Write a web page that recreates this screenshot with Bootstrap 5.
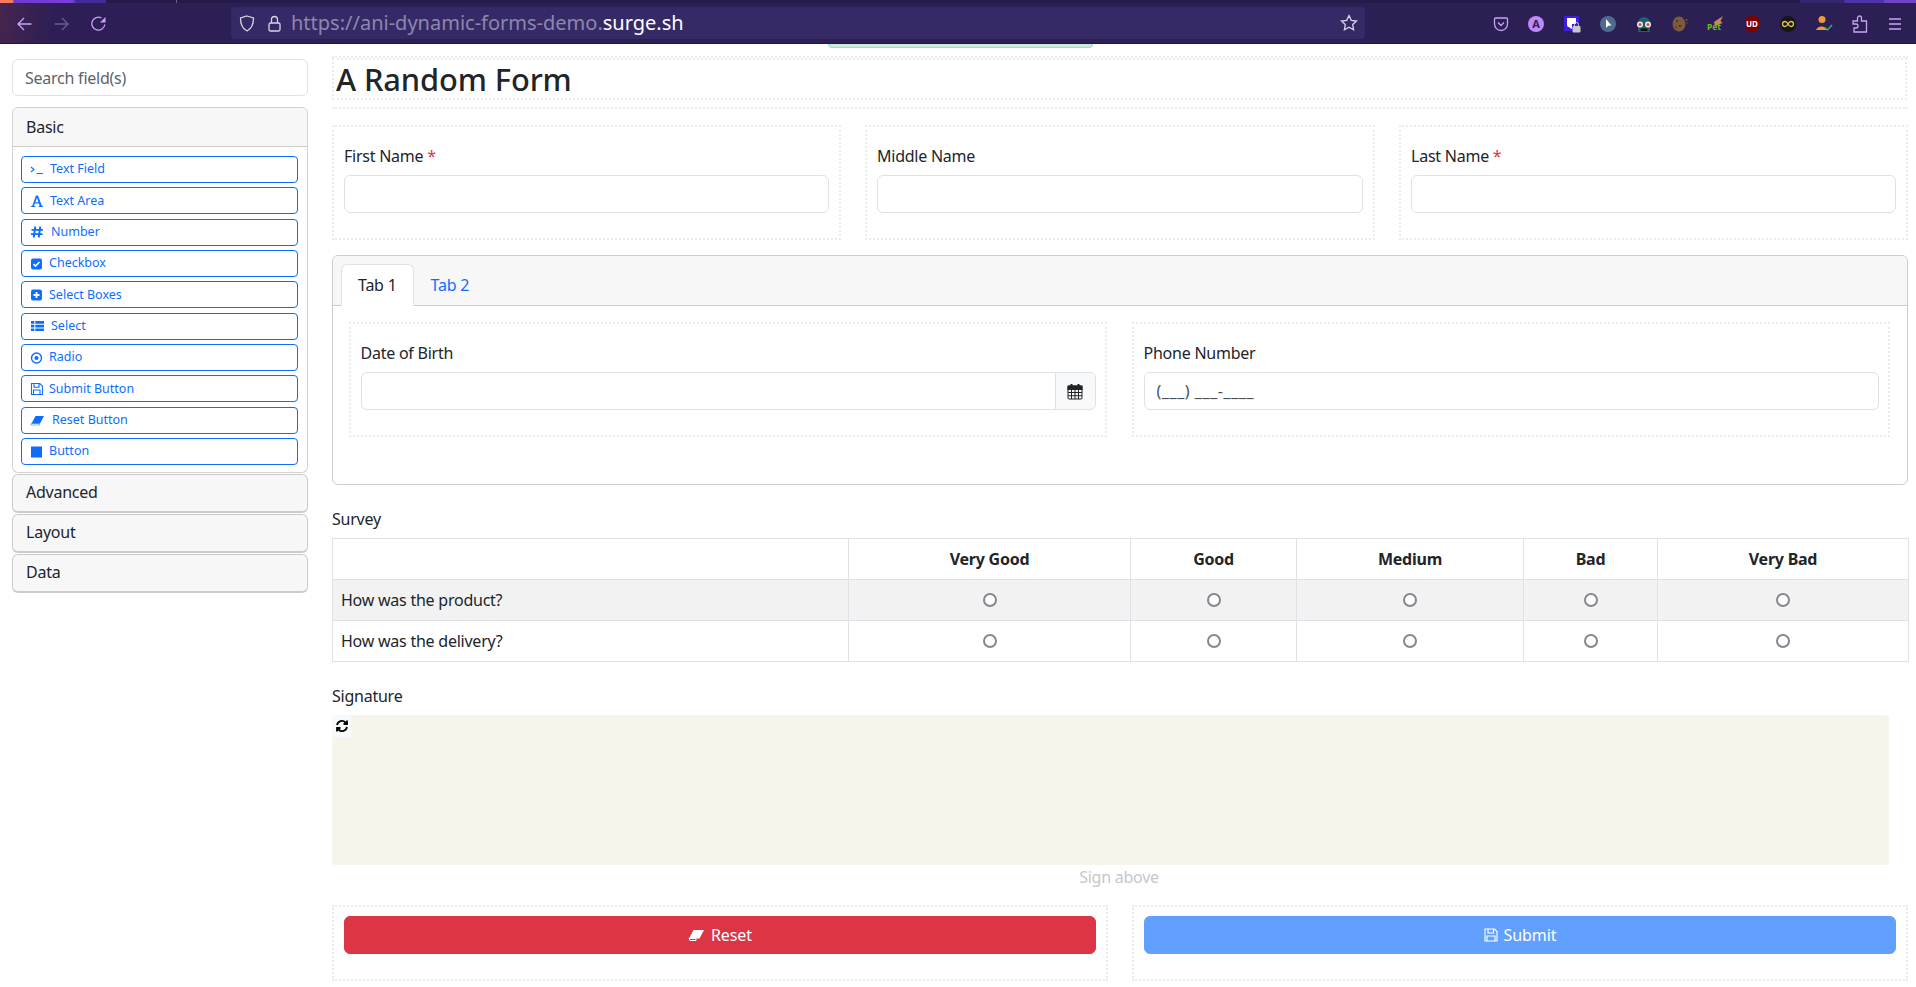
<!DOCTYPE html>
<html lang="en">
<head>
<meta charset="utf-8">
<title>A Random Form</title>
<link rel="stylesheet" href="https://cdn.jsdelivr.net/npm/bootstrap@5.3.0/dist/css/bootstrap.min.css">
<style>
html,body{height:987px;overflow:hidden}
body{font-family:"Noto Sans","Open Sans",sans-serif;font-size:16px;letter-spacing:-.24px;color:#212529;background:#fff}
.ff-chrome{height:44px;background:linear-gradient(100deg,#47254e 0,#2d1f55 55px,#2b1f54 100%);border-bottom:1px solid #1f1640;position:relative;overflow:hidden}
.ff-strip{height:3px;background:#251a49}
.ff-glow{position:absolute;top:0;height:3px}
.ff-glow-l{left:0;width:106px;background:linear-gradient(90deg,#f77a5f 0,#f77a5f 12%,#6c3ad0 13%,#7a3fd8 68%,#45289a 72%,#45289a 100%)}
.ff-glow-r{left:1800px;width:116px;background:linear-gradient(90deg,#35246f 0,#35246f 38%,#4f33a8 39%,#4f33a8 72%,#7042c8 73%,#7042c8 100%)}
.ff-sep{position:absolute;left:176px;top:0;width:1px;height:3px;background:#6d6390}
.ff-bar{height:41px;padding-left:17px;padding-right:13px}
.ff-nav{gap:22px;width:214px}
.ff-url{width:1134px;height:32px;margin-top:-1px;background:#352a66;border-radius:4px;padding:0 7px 0 8px;font-size:20px;letter-spacing:0;color:#8f86ad;white-space:nowrap}
.ff-url b{font-weight:400;color:#fff}
.ff-url svg{flex:none}
.u-lock{margin-left:13px}
.u-text{margin-left:10px}
.ff-ext{margin-left:auto;gap:18px}
.ff-ext svg{display:block}
.peek-tab{position:absolute;left:828px;top:44px;width:265px;height:4px;background:#c9ebdc;border-radius:0 0 4px 4px;border:1px solid #a8d8c4;border-top:0}
.side-col{width:296px;margin-left:12px;margin-top:15px;flex:none}
.main-col{width:1576px;margin-left:24px;margin-top:12px;flex:none}
.search-in{height:37px;font-size:16px;letter-spacing:-.24px;padding:0 12px;border-color:#dee2e6;border-radius:6px}
.search-in::placeholder{color:#5c636a}
.grp{margin-top:11px;border-radius:6px}
.grp .card-header{height:39px;padding:0 13px;font-size:16px;line-height:38px;background:#f7f7f7;border-color:#ccc}
.grp .card-body{padding:9px 9px 7px 8px;height:325px}
.mini{height:39px;border-bottom:2px solid #ccc;border-radius:6px;margin-top:1px;background:#f7f7f7}
.mini .card-header{border:0;background:transparent;padding:0 13px;line-height:35px;height:37px;font-size:16px}
.tool{height:27px;margin-bottom:4.35px;font-size:12.5px;letter-spacing:0;padding:0 8px;border:1.5px solid #0d6efd;border-radius:4px;color:#0d6efd;line-height:1;gap:5px;background:#fff;text-align:left;flex:none}
.tool:last-child{margin-bottom:0}
.tool svg{flex:none;width:14px;height:14px}
.ti1{margin-left:1px}
.ti2{margin-left:2px}
.ti3{margin-left:3px}
.dz{border:2px dotted #ebebeb}
.dz-outer{height:53px;border-bottom:2px dotted #ebebeb;border-top:2px dotted #ebebeb;margin-bottom:16px;width:1576px}
.dz-title{height:42px;border:2px dotted #ebebeb;margin:0 1px 0 0;padding-left:2px;font-size:30.8px;letter-spacing:-.1px;font-weight:500;line-height:38px}
.fld-row{gap:24px}
.fld-1{width:509px}
.fld-2{width:510px}
.fld{height:115px;padding:17px 10px 0}
.fld label,.fld-b label{display:block;font-size:16px;line-height:24px;margin-bottom:7px}
.fld .form-control,.fld-b .form-control{height:38px}
.req{color:#dc3545}
.tabs-card{height:230px;margin-top:15px;border-color:#ccc;border-radius:6px}
.tabs-card .card-header{height:50px;padding:8px 8px 0;background:#f7f7f7;border-color:#ccc}
.tabs-card .nav-tabs{margin:0;border:0}
.tabs-card .nav-link{height:42px;padding:0 16px;line-height:41px;font-size:16px;color:#0d6efd;border-radius:6px 6px 0 0}
.tabs-card .nav-link.active{color:#212529;background:#fff;border-color:#dee2e6 #dee2e6 #fff}
.tabs-card .card-body{padding:16px 16px}
.tab-cols{gap:25px}
.fld-w{width:758px}
.fld-b{height:115px;padding:17px 9.5px 0}
.mask-in{color:#495057;letter-spacing:.55px}
.cal{background:#f8f9fa;border-color:#dee2e6;width:41px;padding:0;justify-content:center}
.cap{font-size:16px;line-height:24px}
.cap-a{margin-top:22px;margin-bottom:7px}
.cap-b{margin-top:22px;margin-bottom:7px}
.grid-tb{margin:0;width:1576px;table-layout:fixed;border-color:#dee2e6}
.grid-tb th,.grid-tb td{height:41px;padding:0 8px;vertical-align:middle;font-size:16px}
.grid-tb th{font-weight:700;text-align:center}
.grid-tb tbody tr:nth-child(odd) td{background:#f2f2f2}
.c1{width:516px}.c2{width:282px}.c3{width:166px}.c4{width:227px}.c5{width:134px}.c6{width:251px}
.rd{display:block;margin:0 auto;width:14px;height:14px;border:2px solid #85888f;border-radius:50%;background:#fff}
.sign-pad{width:1557px;height:150px;background:#f5f5eb;border-radius:4px;position:relative}
.sign-re{position:absolute;left:0;top:0;width:19px;height:22px;background:#f8f9fa;display:flex;align-items:center;justify-content:center}
.sign-note{width:1574px;text-align:center;color:#c4c7ca;font-size:16px;line-height:24px}
.act-row{gap:24px;margin-top:16px}
.act{width:776px;height:76px;padding:9px 10px 0}
.act-btn{height:38px;width:100%;display:flex;align-items:center;justify-content:center;gap:6px;padding:0;font-size:16px;letter-spacing:-.1px}
.act-blue{background:#62a0ff;border-color:#62a0ff;color:#fff}
.ico-t{font-family:"Noto Sans",sans-serif;font-weight:700;letter-spacing:0}
</style>
</head>
<body>
<div class="ff-chrome">
  <div class="ff-strip"></div>
  <div class="ff-glow ff-glow-l"></div>
  <div class="ff-sep"></div>
  <div class="ff-glow ff-glow-r"></div>
  <div class="ff-bar d-flex align-items-center">
    <div class="ff-nav d-flex align-items-center">
      <svg width="15" height="14" viewBox="0 0 15 14" fill="none" stroke="#c9a4f5" stroke-width="1.300"><path d="M14.500 7H1M7 1 1 7l6 6"/></svg>
      <svg width="15" height="14" viewBox="0 0 15 14" fill="none" stroke="#6d5a96" stroke-width="1.300"><path d="M.5 7H14M8 1l6 6-6 6"/></svg>
      <svg width="15" height="15" viewBox="0 0 15 15" fill="none" stroke="#c9a4f5" stroke-width="1.300"><path d="M13.800 8.500A6.500 6.500 0 1 1 10.500 2"/><path d="M14.500 1v5.500H9Z" fill="#c9a4f5" stroke="none"/></svg>
    </div>
    <div class="ff-url d-flex align-items-center">
      <svg width="16" height="17" viewBox="0 0 16 17" fill="none" stroke="#d8d4e6" stroke-width="1.300"><path d="M8 1 14.500 3c0 6.500-1.500 10.500-6.500 13C3 13.500 1.500 9.500 1.500 3Z"/></svg>
      <svg class="u-lock" width="13" height="17" viewBox="0 0 13 17" fill="none" stroke="#d8d4e6" stroke-width="1.300"><rect x="1" y="8" width="11" height="8" rx="1.500"/><path d="M3.500 8V4.500a3 3 0 0 1 6 0V8"/></svg>
      <span class="u-text">https://ani-dynamic-forms-demo.<b>surge.sh</b></span>
      <svg class="ms-auto" width="18" height="18" viewBox="0 0 18 18" fill="none" stroke="#d8d4e6" stroke-width="1.300"><path d="M9 1.500 11.300 6.300l5.200.7-3.800 3.600.9 5.200L9 13.300l-4.600 2.500.9-5.200L1.500 7l5.200-.7Z"/></svg>
    </div>
    <div class="ff-ext d-flex align-items-center">
      <svg width="16" height="16" viewBox="0 0 16 16" fill="none" stroke="#c9a4f5" stroke-width="1.300"><path d="M2.500 2h11a1 1 0 0 1 1 1v5a6.500 6.500 0 0 1-13 0V3a1 1 0 0 1 1-1Z"/><path d="m5 6.500 3 3 3-3"/></svg>
      <svg width="18" height="18" viewBox="0 0 18 18"><circle cx="9" cy="9" r="8" fill="#c08af5"/><text class="ico-t" x="9" y="13" font-size="11" text-anchor="middle" fill="#2b1f54">A</text></svg>
      <svg width="18" height="18" viewBox="0 0 18 18"><rect x="1" y="1" width="15" height="15" fill="#3f1fdc"/><path d="M4 3h9v6H9v5L4 11Z" fill="#fff"/><rect x="9.500" y="11" width="8" height="6.500" rx="1" fill="#c8c8c8"/><path d="M11.500 11V9.500a2 2 0 0 1 4 0V11" fill="none" stroke="#c8c8c8"/></svg>
      <svg width="18" height="18" viewBox="0 0 18 18"><circle cx="9" cy="9" r="8" fill="#4e6a8c"/><path d="m7 4 0 9 2.300-2.200L12.500 10.500Z" fill="#fff"/></svg>
      <svg width="18" height="18" viewBox="0 0 18 18"><path d="M3 8a6 6 0 0 1 12 0v9H3Z" fill="#21606b"/><circle cx="5" cy="9.500" r="3" fill="#eee"/><circle cx="13" cy="9.500" r="3" fill="#eee"/><circle cx="5" cy="9.500" r="1.500" fill="#e0482f"/><circle cx="13" cy="9.500" r="1.500" fill="#e0482f"/><rect x="5.500" y="13.500" width="7" height="2.500" fill="#111"/></svg>
      <svg width="18" height="18" viewBox="0 0 18 18"><ellipse cx="8" cy="9" rx="6.500" ry="7.500" fill="#7c5a3c"/><circle cx="6" cy="6" r="1" fill="#3f2a18"/><circle cx="9" cy="11" r="1" fill="#3f2a18"/><circle cx="5" cy="12" r=".8" fill="#3f2a18"/><circle cx="15.500" cy="5" r="1" fill="#7c5a3c"/><circle cx="16" cy="8" r=".7" fill="#7c5a3c"/></svg>
      <svg width="18" height="18" viewBox="0 0 18 18"><path d="M7 7 16 1l-2.500 5 2 2L8 11Z" fill="#c68a54"/><text class="ico-t" x="0" y="15" font-size="8.500" fill="#6ec20e">Pet</text></svg>
      <svg width="18" height="18" viewBox="0 0 18 18"><path d="M9 .5 16 3v8c0 3-3 5.500-7 6.500-4-1-7-3.500-7-6.500V3Z" fill="#800000"/><text class="ico-t" x="9" y="12" font-size="8" text-anchor="middle" fill="#fff">UD</text></svg>
      <svg width="18" height="18" viewBox="0 0 18 18"><circle cx="9" cy="9" r="8" fill="#161616"/><path d="M9 9c-1-2-2-2.500-3-2.500a2.500 2.500 0 0 0 0 5c1 0 2-.5 3-2.500s2-2.500 3-2.500a2.500 2.500 0 0 1 0 5c-1 0-2-.5-3-2.500Z" fill="none" stroke="#e3c44a" stroke-width="1.300"/></svg>
      <svg width="18" height="18" viewBox="0 0 18 18"><circle cx="7" cy="4.500" r="3.500" fill="#f09a3e"/><path d="M1 15a6 6 0 0 1 11 0Z" fill="#f09a3e"/><path d="m10 12.500 2.500 2.500L17 10" fill="none" stroke="#2fb36a" stroke-width="1.500"/></svg>
      <svg width="18" height="18" viewBox="0 0 18 18" fill="none" stroke="#c9a4f5" stroke-width="1.300"><path d="M2 6h4.500V3a2 2 0 0 1 4 0v3H15.500v11H3v-4h2a2 2 0 0 0 0-4H2Z"/></svg>
      <svg width="16" height="14" viewBox="0 0 16 14" fill="none" stroke="#c9a4f5" stroke-width="1.400"><path d="M2 2h12M2 7h12M2 12h12"/></svg>
    </div>
  </div>
</div>
<div class="peek-tab"></div>
<div class="d-flex align-items-start">
  <aside class="side-col">
    <input class="form-control search-in" placeholder="Search field(s)">
    <div class="card grp">
      <div class="card-header">Basic</div>
      <div class="card-body d-flex flex-column">
        <button class="btn tool d-flex align-items-center w-100"><svg viewBox="0 0 14 14" fill="none" stroke="#0d6efd" stroke-width="1.100"><path d="m1 4 3 2.500L1 9M6.500 10.500H13"/></svg><span class="ti1">Text Field</span></button>
        <button class="btn tool d-flex align-items-center w-100"><svg viewBox="0 0 14 14" fill="#0d6efd"><path d="M6 1.500h2l3.800 10.300 1.200.4v.8H8.600v-.8l1.100-.4-.8-2.400H4.800L4 11.800l1.200.4v.8H1v-.8l1.300-.4ZM7 3.800 5.300 8.300h3.300Z"/></svg><span class="ti1">Text Area</span></button>
        <button class="btn tool d-flex align-items-center w-100"><svg viewBox="0 0 14 14" fill="none" stroke="#0d6efd" stroke-width="1.900"><path d="M5.300 1.500 3.700 12.500M10.300 1.500 8.700 12.500M1.500 4.900h11.500M1 9.100h11.500"/></svg><span class="ti2">Number</span></button>
        <button class="btn tool d-flex align-items-center w-100"><svg viewBox="0 0 14 14"><rect x="1" y="1.500" width="11" height="11" rx="2" fill="#0d6efd"/><path d="m3.500 7 2 2 4-4" fill="none" stroke="#fff" stroke-width="1.600"/></svg><span>Checkbox</span></button>
        <button class="btn tool d-flex align-items-center w-100"><svg viewBox="0 0 14 14"><rect x="1" y="1.500" width="11" height="11" rx="2" fill="#0d6efd"/><path d="M6.500 4v6M3.500 7h6" fill="none" stroke="#fff" stroke-width="1.800"/></svg><span>Select Boxes</span></button>
        <button class="btn tool d-flex align-items-center w-100"><svg viewBox="0 0 14 14" fill="#0d6efd"><path d="M1 2h3.300v2.700H1ZM5.300 2H14v2.700H5.300ZM1 5.700h3.300v2.700H1ZM5.300 5.700H14v2.700H5.300ZM1 9.400h3.300v2.700H1ZM5.300 9.400H14v2.700H5.300Z"/></svg><span class="ti2">Select</span></button>
        <button class="btn tool d-flex align-items-center w-100"><svg viewBox="0 0 14 14" fill="none" stroke="#0d6efd" stroke-width="1.400"><circle cx="6.500" cy="7" r="5"/><circle cx="6.500" cy="7" r="2" fill="#0d6efd" stroke="none"/></svg><span>Radio</span></button>
        <button class="btn tool d-flex align-items-center w-100"><svg viewBox="0 0 14 14" fill="none" stroke="#0d6efd" stroke-width="1.100"><path d="M1.500 1.500h8.300l2.700 2.700v8.300h-11ZM4 1.500v3.700h5V1.500M3.500 12.500V8h6.500v4.500"/></svg><span>Submit Button</span></button>
        <button class="btn tool d-flex align-items-center w-100"><svg viewBox="0 0 14 14" fill="#0d6efd"><path d="M5.500 3H14L10 10.500H1.500Z"/><path d="M1.500 10.500h8v1.500H.8Z" stroke="#0d6efd" stroke-width=".5" fill="none"/></svg><span class="ti3">Reset Button</span></button>
        <button class="btn tool d-flex align-items-center w-100"><svg viewBox="0 0 14 14"><rect x="1" y="1.500" width="11" height="11" fill="#0d6efd"/></svg><span>Button</span></button>
      </div>
    </div>
    <div class="card mini"><div class="card-header">Advanced</div></div>
    <div class="card mini"><div class="card-header">Layout</div></div>
    <div class="card mini"><div class="card-header">Data</div></div>
  </aside>
  <main class="main-col">
    <div class="dz-outer"><h1 class="dz-title">A Random Form</h1></div>
    <div class="d-flex fld-row">
      <div class="dz fld fld-1"><label>First Name <span class="req">*</span></label><input class="form-control"></div>
      <div class="dz fld fld-2"><label>Middle Name</label><input class="form-control"></div>
      <div class="dz fld fld-1"><label>Last Name <span class="req">*</span></label><input class="form-control"></div>
    </div>
    <div class="card tabs-card">
      <div class="card-header">
        <ul class="nav nav-tabs"><li class="nav-item"><a class="nav-link active" href="#">Tab 1</a></li><li class="nav-item"><a class="nav-link" href="#">Tab 2</a></li></ul>
      </div>
      <div class="card-body">
        <div class="d-flex tab-cols">
          <div class="dz fld-b fld-w"><label>Date of Birth</label>
            <div class="input-group"><input class="form-control"><span class="input-group-text cal"><svg width="16" height="17" viewBox="0 0 16 17" fill="none" stroke="#212529"><rect x="1" y="3" width="14" height="13" rx="1"/><rect x="1" y="3" width="14" height="3.500" fill="#212529"/><path d="M1 9.500h14M1 12.700h14M4.500 6v10M8 6v10M11.500 6v10"/><path d="M4.500 1v3.500M11.500 1v3.500" stroke-width="2"/></svg></span></div>
          </div>
          <div class="dz fld-b fld-w"><label>Phone Number</label><input class="form-control mask-in" value="(___) ___-____"></div>
        </div>
      </div>
    </div>
    <div class="cap cap-a">Survey</div>
    <table class="table table-bordered grid-tb">
      <colgroup><col class="c1"><col class="c2"><col class="c3"><col class="c4"><col class="c5"><col class="c6"></colgroup>
      <thead><tr><th></th><th>Very Good</th><th>Good</th><th>Medium</th><th>Bad</th><th>Very Bad</th></tr></thead>
      <tbody>
        <tr><td>How was the product?</td><td><span class="rd"></span></td><td><span class="rd"></span></td><td><span class="rd"></span></td><td><span class="rd"></span></td><td><span class="rd"></span></td></tr>
        <tr><td>How was the delivery?</td><td><span class="rd"></span></td><td><span class="rd"></span></td><td><span class="rd"></span></td><td><span class="rd"></span></td><td><span class="rd"></span></td></tr>
      </tbody>
    </table>
    <div class="cap cap-b">Signature</div>
    <div class="sign-pad"><div class="sign-re"><svg width="14" height="14" viewBox="0 0 14 14" fill="none" stroke="#000" stroke-width="1.800"><path d="M2 6a5 5 0 0 1 8.500-2.500L12 5M12 1.500V5H8.500M12 8a5 5 0 0 1-8.500 2.500L2 9M2 12.500V9h3.500"/></svg></div></div>
    <div class="sign-note">Sign above</div>
    <div class="d-flex act-row">
      <div class="dz act"><button class="btn btn-danger act-btn"><svg width="17" height="14" viewBox="0 0 17 14"><path d="M5.500 2H16l-4.500 8.500H1Z" fill="#fff"/><path d="M1 10.500h7v2H2Z" fill="none" stroke="#fff"/></svg>Reset</button></div>
      <div class="dz act"><button class="btn act-btn act-blue"><svg width="14" height="14" viewBox="0 0 14 14" fill="none" stroke="#fff" stroke-width="1.100"><path d="M1 1h9.500L13 3.500V13H1ZM4 1v4h5.500V1M3 13V8h8v5"/></svg>Submit</button></div>
    </div>
  </main>
</div>
<script src="https://cdn.jsdelivr.net/npm/bootstrap@5.3.0/dist/js/bootstrap.bundle.min.js"></script>
</body>
</html>
